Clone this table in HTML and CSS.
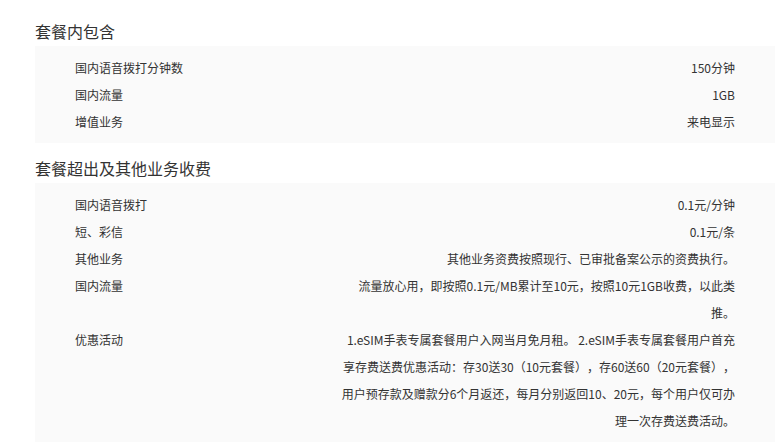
FILE: index.html
```html
<!DOCTYPE html>
<html lang="zh-CN">
<head>
<meta charset="utf-8">
<title>套餐详情</title>
<link rel="stylesheet" href="styles.css">
</head>
<body>
<div class="page">
  <section class="section">
    <h2 class="section-title">套餐内包含</h2>
    <div class="panel">
      <div class="row"><div class="label">国内语音拨打分钟数</div><div class="value">150分钟</div></div>
      <div class="row"><div class="label">国内流量</div><div class="value">1GB</div></div>
      <div class="row"><div class="label">增值业务</div><div class="value">来电显示</div></div>
    </div>
  </section>
  <section class="section">
    <h2 class="section-title">套餐超出及其他业务收费</h2>
    <div class="panel">
      <div class="row"><div class="label">国内语音拨打</div><div class="value">0.1元/分钟</div></div>
      <div class="row"><div class="label">短、彩信</div><div class="value">0.1元/条</div></div>
      <div class="row"><div class="label">其他业务</div><div class="value">其他业务资费按照现行、已审批备案公示的资费执行。</div></div>
      <div class="row"><div class="label">国内流量</div><div class="value">流量放心用，即按照0.1元/MB累计至10元，按照10元1GB收费，以此类推。</div></div>
      <div class="row"><div class="label">优惠活动</div><div class="value">1.eSIM手表专属套餐用户入网当月免月租。 2.eSIM手表专属套餐用户首充享存费送费优惠活动：存30送30（10元套餐），存60送60（20元套餐），用户预存款及赠款分6个月返还，每月分别返回10、20元，每个用户仅可办理一次存费送费活动。</div></div>
    </div>
  </section>
</div>
</body>
</html>
```

FILE: styles.css
```css
html, body {
  margin: 0;
  padding: 0;
  background: #ffffff;
}
body {
  font-family: "Noto Sans CJK SC", "Microsoft YaHei", sans-serif;
  color: #333333;
  text-spacing-trim: space-all;
}
.page {
  padding: 6px 4px 0 35px;
}
.section-title {
  margin: 0 0 3px 0;
  padding-top: 13px;
  font-size: 16px;
  font-weight: normal;
  line-height: 24px;
  color: #333333;
}
.panel {
  background: #fafafa;
  padding: 8px 40px 8px 40px;
}
.row {
  display: flex;
  justify-content: space-between;
  font-size: 12px;
  line-height: 27px;
}
.label {
  flex: 1;
}
.value {
  width: 400px;
  text-align: right;
}
```
